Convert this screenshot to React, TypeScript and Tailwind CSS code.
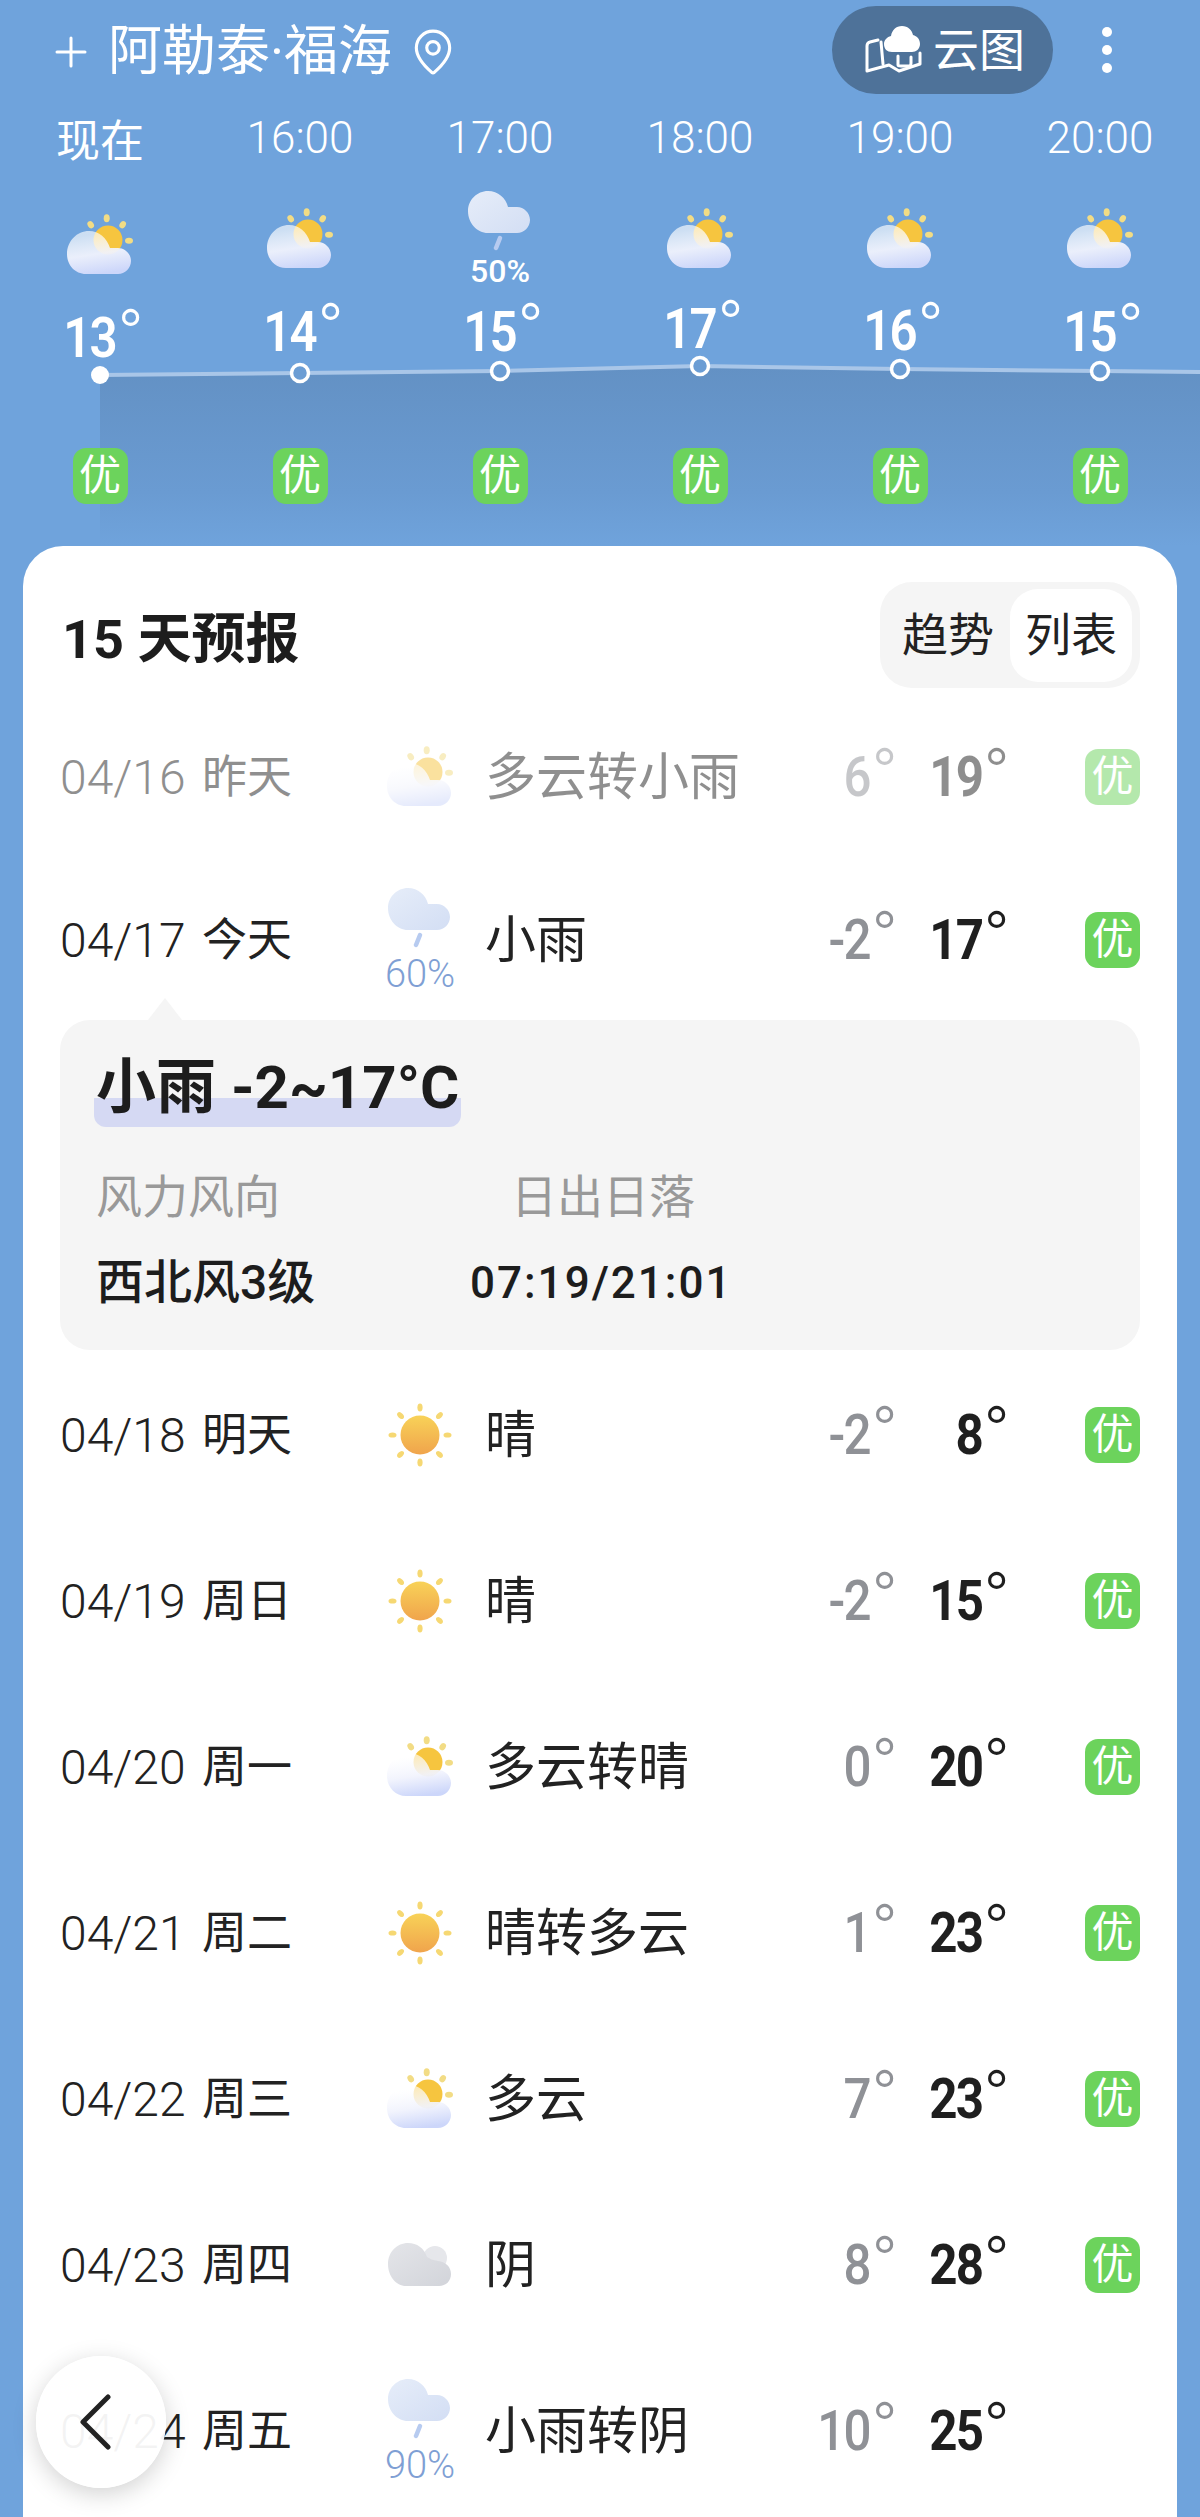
import { MapPin, Plus } from "lucide-react";

const hours = [
  { time: "现在", temp: "13", icon: "sun", iconPad: "pt-[38px]", tempPad: "pt-[14px]" },
  { time: "16:00", temp: "14", icon: "sun", iconPad: "pt-[32px]", tempPad: "pt-[8px]" },
  { time: "17:00", temp: "15", icon: "rain", iconPad: "pt-[15px]", tempPad: "pt-[8px]", pct: "50%" },
  { time: "18:00", temp: "17", icon: "sun", iconPad: "pt-[32px]", tempPad: "pt-[5px]" },
  { time: "19:00", temp: "16", icon: "sun", iconPad: "pt-[32px]", tempPad: "pt-[7px]" },
  { time: "20:00", temp: "15", icon: "sun", iconPad: "pt-[32px]", tempPad: "pt-[8px]" },
];

const points = [
  [100, 375],
  [300, 373],
  [500, 371],
  [700, 366],
  [900, 369],
  [1100, 371],
];

function CloudSun({ id }: { id: string }) {
  return (
    <svg width="66" height="62" viewBox="0 0 66 62" fill="none">
      <defs>
        <linearGradient id={`${id}-cloud`} x1="0.3" y1="0.1" x2="0.5" y2="1">
          <stop offset="0" stopColor="#ffffff" stopOpacity="0.65" />
          <stop offset="0.5" stopColor="#f1f3fd" stopOpacity="0.95" />
          <stop offset="1" stopColor="#ccd6fa" />
        </linearGradient>
      </defs>
      <ellipse cx="23.7" cy="10.7" rx="3" ry="3.8" transform="rotate(-35 23.7 10.7)" fill="#f2dc85" />
      <ellipse cx="39.7" cy="4.3" rx="3" ry="4" fill="#f2dc85" />
      <ellipse cx="55.7" cy="10.7" rx="3" ry="3.8" transform="rotate(35 55.7 10.7)" fill="#f2dc85" />
      <ellipse cx="62" cy="26.7" rx="4" ry="3" fill="#f2dc85" />
      <circle cx="41" cy="26" r="14.5" fill="#f6c53f" />
      <path
        d="M19 60C8 60 0 51 0 40C0 27 10 17 22 17C32 17 40 24 43 34C46 34 48 34 51 34C58 34 64 40 64 47C64 54 58 60 51 60Z"
        fill={`url(#${id}-cloud)`}
      />
    </svg>
  );
}

function CloudRain({ id }: { id: string }) {
  return (
    <svg width="64" height="60" viewBox="0 0 64 60" fill="none">
      <defs>
        <linearGradient id={`${id}-rain`} x1="0" y1="0" x2="1" y2="1">
          <stop offset="0" stopColor="#e6edf9" />
          <stop offset="1" stopColor="#d3def4" />
        </linearGradient>
      </defs>
      <path
        d="M20 42C9 42 0 32 0 20C0 9 9 0 20 0C30 0 38 7 40 16C42 16 44 16 49 16C56 16 62 22 62 29C62 36 56 42 49 42Z"
        fill={`url(#${id}-rain)`}
      />
      <path d="M32 47L28 57" stroke="#b7cbf0" strokeWidth="4.5" strokeLinecap="round" />
    </svg>
  );
}

function Sun({ id }: { id: string }) {
  const rays = [0, 45, 90, 135, 180, 225, 270, 315];
  return (
    <svg width="64" height="64" viewBox="0 0 64 64" fill="none">
      <defs>
        <linearGradient id={`${id}-sun`} x1="0" y1="0" x2="0" y2="1">
          <stop offset="0" stopColor="#f8d258" />
          <stop offset="1" stopColor="#f0a44c" />
        </linearGradient>
      </defs>
      {rays.map((r) => (
        <ellipse key={r} cx="32" cy="4.5" rx="2.6" ry="4" fill="#f6d873" transform={`rotate(${r} 32 32)`} />
      ))}
      <circle cx="32" cy="32" r="19.5" fill={`url(#${id}-sun)`} />
    </svg>
  );
}

function Overcast({ id }: { id: string }) {
  return (
    <svg width="64" height="44" viewBox="0 0 64 44" fill="none">
      <defs>
        <linearGradient id={`${id}-gray`} x1="0" y1="0" x2="1" y2="1">
          <stop offset="0" stopColor="#e4e5e9" />
          <stop offset="1" stopColor="#d2d4da" />
        </linearGradient>
      </defs>
      <circle cx="47" cy="15" r="12" fill="#e6e7eb" />
      <path
        d="M18 43C8 43 0 33 0 21C0 9 9 0 20 0C29 0 36 5 39 14C43 16 44 17 50 18C58 19 63 24 63 31C63 38 58 43 51 43Z"
        fill={`url(#${id}-gray)`}
      />
    </svg>
  );
}

function MapCloud() {
  return (
    <svg width="58" height="48" viewBox="0 0 58 48" fill="none">
      <path
        d="M13 14L5 16C3 16.500 2 18 2 20V45L24 39L34 45L55 38V27"
        stroke="white"
        strokeWidth="3"
        strokeLinejoin="round"
        strokeLinecap="round"
      />
      <path d="M16 16L18 38" stroke="white" strokeWidth="3" strokeLinecap="round" />
      <path d="M33 30V39C33 40 35 40 36 40H44C45 40 46 39 46 37V31" stroke="white" strokeWidth="3" strokeLinecap="round" />
      <path
        d="M37 0C43 0 47 4 48 9C52 10 55 13 55 18C55 23 51 26 47 26H27C22 26 19 23 19 18C19 14 22 11 26 10C27 4 31 0 37 0Z"
        fill="white"
      />
    </svg>
  );
}

function WeatherIcon({ kind, id }: { kind: string; id: string }) {
  if (kind === "sun") return <CloudSun id={id} />;
  if (kind === "rain") return <CloudRain id={id} />;
  if (kind === "clear") return <Sun id={id} />;
  return <Overcast id={id} />;
}

function Temp({ value, className }: { value: string; className?: string }) {
  return (
    <span className={`relative inline-block text-[56px] leading-none tracking-[-2px] ${className}`}>
      <span className="inline-block origin-right scale-x-[0.88]">{value}</span>
      <span className="absolute left-full top-[-9px] ml-[1px] text-[72px] font-light leading-none tracking-normal">°</span>
    </span>
  );
}

function Badge() {
  return (
    <div className="flex h-[56px] w-[55px] items-center justify-center rounded-[13px] bg-[#6cd35c] text-[42px] leading-none text-white">
      优
    </div>
  );
}

const days = [
  { date: "04/16", day: "昨天", icon: "sun", text: "多云转小雨", low: "6", high: "19", past: true },
  { date: "04/17", day: "今天", icon: "rain", text: "小雨", low: "-2", high: "17", pct: "60%", height: "h-[160px]" },
  { date: "04/18", day: "明天", icon: "clear", text: "晴", low: "-2", high: "8" },
  { date: "04/19", day: "周日", icon: "clear", text: "晴", low: "-2", high: "15" },
  { date: "04/20", day: "周一", icon: "sun", text: "多云转晴", low: "0", high: "20" },
  { date: "04/21", day: "周二", icon: "clear", text: "晴转多云", low: "1", high: "23" },
  { date: "04/22", day: "周三", icon: "sun", text: "多云", low: "7", high: "23" },
  { date: "04/23", day: "周四", icon: "cloudy", text: "阴", low: "8", high: "28" },
  { date: "04/24", day: "周五", icon: "rain", text: "小雨转阴", low: "10", high: "25", pct: "90%", noBadge: true },
];

type Day = (typeof days)[number] & { pct?: string; height?: string; past?: boolean; noBadge?: boolean };

function DayRow({ item }: { item: Day }) {
  return (
    <div className={`flex items-center pl-[37px] pr-[37px] ${item.height ?? "h-[166px]"} ${item.past ? "opacity-50" : ""}`}>
      <div className="mt-[1px] flex w-[328px] items-center text-[#222]">
        <span className="w-[142px] text-[48px] font-light leading-none">{item.date}</span>
        <span className="text-[45px] leading-none">{item.day}</span>
      </div>
      <div className="flex w-[64px] flex-col items-center">
        <WeatherIcon kind={item.icon} id={item.date} />
        {item.pct && <span className="mt-[7px] text-[38px] font-light leading-none text-[#7f9fd4]">{item.pct}</span>}
      </div>
      <div className="ml-[33px] mt-[1px] flex-1 text-[51px] leading-none text-[#222]">{item.text}</div>
      <div className="text-right">
        <Temp value={item.low} className="font-medium text-[#8f9196]" />
      </div>
      <div className="w-[112px] text-right">
        <Temp value={item.high} className="font-bold text-[#1f1f1f]" />
      </div>
      <div className="ml-[103px] w-[55px]">{!item.noBadge && <Badge />}</div>
    </div>
  );
}

export default function App() {
  const linePoints = [...points, [1200, 372]].map((p) => p.join(",")).join(" ");

  return (
    <div className="relative flex h-[2517px] w-[1200px] flex-col overflow-hidden bg-[#6fa3dc] font-['Roboto','Noto_Sans_CJK_SC',sans-serif]">
      {/* top bar */}
      <div className="flex h-[100px] shrink-0 items-center pl-[47px] pr-[88px] text-white">
        <Plus size={48} strokeWidth={1.5} className="mt-[4px]" />
        <span className="ml-[13px] mt-[4px] text-[54px] leading-none">阿勒泰·福海</span>
        <MapPin size={50} strokeWidth={1.5} className="ml-[16px] mt-[3px]" />
        <div className="ml-auto flex h-[88px] w-[221px] items-center gap-[10px] rounded-full bg-[#4e7299] pl-[33px]">
          <MapCloud />
          <span className="text-[46px] leading-none">云图</span>
        </div>
        <div className="ml-[49px] flex flex-col gap-[8px]">
          <span className="h-[10px] w-[10px] rounded-full bg-white" />
          <span className="h-[10px] w-[10px] rounded-full bg-white" />
          <span className="h-[10px] w-[10px] rounded-full bg-white" />
        </div>
      </div>

      {/* hourly */}
      <div className="relative h-[446px] shrink-0">
        <svg className="absolute inset-0" width="1200" height="446" viewBox="0 100 1200 446" fill="none">
          <defs>
            <linearGradient id="area" x1="0" y1="0" x2="0" y2="1">
              <stop offset="0" stopColor="#6391c4" />
              <stop offset="0.7" stopColor="#6a9bd2" />
              <stop offset="1" stopColor="#6fa3dc" />
            </linearGradient>
          </defs>
          <polygon points={`${linePoints} 1200,546 100,546`} fill="url(#area)" />
          <polyline points={linePoints} stroke="#a9c6e8" strokeWidth="4" />
          {points.map(([x, y], i) => (
            <circle
              key={x}
              cx={x}
              cy={y}
              r={i === 0 ? 9 : 8.5}
              fill={i === 0 ? "#ffffff" : "#6b9dd4"}
              stroke="#ffffff"
              strokeWidth={i === 0 ? 0 : 3.5}
            />
          ))}
        </svg>
        <div className="relative grid grid-cols-6 text-white">
          {hours.map((h) => (
            <div key={h.time} className="flex flex-col items-center">
              <div className={`flex h-[76px] items-center text-[44px] font-light leading-none ${h.time === "现在" ? "pt-[8px] text-[40px] font-normal" : ""}`}>
                {h.time}
              </div>
              <div className={`flex h-[120px] flex-col items-center ${h.iconPad}`}>
                <WeatherIcon kind={h.icon} id={`h${h.time}`} />
                {h.pct && <span className="mt-[4px] text-[32px] font-medium leading-none">{h.pct}</span>}
              </div>
              <div className={`h-[152px] pr-[28px] ${h.tempPad}`}>
                <Temp value={h.temp} className="font-semibold" />
              </div>
              <Badge />
            </div>
          ))}
        </div>
      </div>

      {/* 15 day card */}
      <div className="mx-[23px] flex-1 rounded-t-[40px] bg-white pt-[36px]">
        <div className="flex h-[106px] items-center justify-between pl-[39px] pr-[37px]">
          <h2 className="mt-[9px] text-[54px] font-bold leading-none text-[#1d1d1d]">15 天预报</h2>
          <div className="flex h-[106px] w-[260px] items-center justify-end rounded-[32px] bg-[#f5f5f5] pr-[8px] text-[46px] leading-none text-[#222]">
            <span className="mr-[16px]">趋势</span>
            <span className="flex h-[93px] w-[122px] items-center justify-center rounded-[28px] bg-white">列表</span>
          </div>
        </div>
        <div className="pt-[6px]">
          {days.slice(0, 2).map((d) => (
            <DayRow key={d.date} item={d} />
          ))}
          <div className="relative mx-[37px] mb-[2px] h-[330px] rounded-[30px] bg-[#f5f5f5] px-[36px] pt-[38px]">
            <div className="absolute left-[88px] top-[-22px] h-0 w-0 border-x-[17px] border-b-[22px] border-x-transparent border-b-[#f5f5f5]" />
            <div className="relative inline-block h-[60px]">
              <div className="absolute inset-x-[-2px] bottom-[-9px] h-[29px] rounded-b-[12px] bg-[#d5d9f3]" />
              <span className="relative block text-[60px] font-bold leading-none text-[#1d1d1d]">小雨 -2~17°C</span>
            </div>
            <div className="mt-[56px] flex text-[46px] leading-none text-[#999]">
              <span className="w-[415px]">风力风向</span>
              <span>日出日落</span>
            </div>
            <div className="mt-[39px] flex items-center leading-none text-[#1d1d1d]">
              <span className="w-[374px] text-[48px] font-medium">西北风3级</span>
              <span className="text-[44px] font-medium tracking-[2px]">07:19/21:01</span>
            </div>
          </div>
          {days.slice(2).map((d) => (
            <DayRow key={d.date} item={d} />
          ))}
        </div>
      </div>

      {/* back button */}
      <div className="absolute left-[36px] top-[2356px] flex h-[132px] w-[130px] items-center justify-center rounded-full bg-white/95 shadow-[0_6px_24px_rgba(0,0,0,0.18)]">
        <svg width="34" height="56" viewBox="0 0 34 56" fill="none" className="mr-[12px]">
          <path d="M30 3L5 28L30 53" stroke="#222" strokeWidth="5" strokeLinecap="round" strokeLinejoin="round" />
        </svg>
      </div>
    </div>
  );
}
